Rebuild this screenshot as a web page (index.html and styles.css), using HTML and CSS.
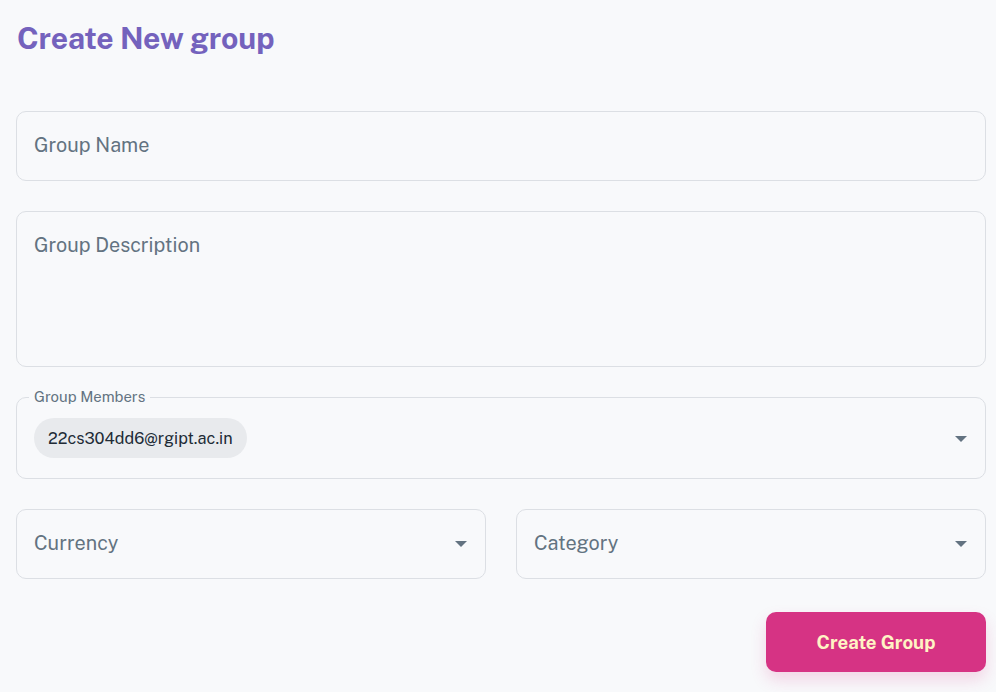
FILE: index.html
```html
<!DOCTYPE html>
<html>
<head>
<meta charset="utf-8">
<link rel="stylesheet" href="styles.css">
</head>
<body>
<div class="page">
  <h1 class="title">Create New group</h1>
  <form class="form">
    <div class="field field-name"><span class="placeholder">Group Name</span></div>
    <div class="field field-desc"><span class="placeholder">Group Description</span></div>
    <div class="field field-members">
      <span class="legend">Group Members</span>
      <span class="chip">22cs304dd6@rgipt.ac.in</span>
      <span class="caret"></span>
    </div>
    <div class="row">
      <div class="field field-select"><span class="placeholder">Currency</span><span class="caret"></span></div>
      <div class="field field-select"><span class="placeholder">Category</span><span class="caret"></span></div>
    </div>
    <div class="actions">
      <button type="button" class="btn">Create Group</button>
    </div>
  </form>
</div>
</body>
</html>
```
FILE: styles.css
```css
* { box-sizing: border-box; }
html, body { margin: 0; padding: 0; }
body {
  background: #f8f9fb;
  font-family: "Public Sans", Inter, "Noto Sans", sans-serif;
  width: 996px;
  height: 692px;
  overflow: hidden;
}
.page {
  padding: 20px 10px 0 16px;
}
.title {
  margin: 0 0 0 1px;
  font-size: 30.2px;
  line-height: 36px;
  font-weight: 700;
  color: #7462bd;
  letter-spacing: -0.15px;
}
.form {
  margin-top: 55px;
  display: flex;
  flex-direction: column;
  gap: 30px;
}
.field {
  position: relative;
  border: 1px solid #dcdfe4;
  border-radius: 10px;
  display: flex;
  align-items: center;
  padding: 0 17px;
}
.placeholder {
  font-size: 19.8px;
  color: #637381;
}
.field-name { height: 70px; }
.field-name .placeholder { margin-top: -4px; }
.field-desc { height: 156px; align-items: flex-start; padding-top: 21px; }
.field-members { height: 82px; }
.legend {
  position: absolute;
  top: -10px;
  left: 12px;
  padding: 0 5px;
  background: #f8f9fb;
  font-size: 14.9px;
  line-height: 18px;
  color: #637381;
}
.chip {
  height: 40px;
  padding: 0 14px;
  border-radius: 20px;
  background: #e8eaed;
  display: inline-flex;
  align-items: center;
  font-size: 16.3px;
  color: #212b36;
}
.caret {
  margin-left: auto;
  margin-right: 1px;
  width: 0;
  height: 0;
  border-left: 6px solid transparent;
  border-right: 6px solid transparent;
  border-top: 6px solid #637381;
}
.field-members .caret { margin-top: 2px; }
.row {
  display: grid;
  grid-template-columns: 1fr 1fr;
  gap: 30px;
}
.field-select { height: 70px; }
.field-select .placeholder { margin-top: -4px; }
.actions {
  display: flex;
  justify-content: flex-end;
  margin-top: 3px;
}
.btn {
  width: 220px;
  height: 60px;
  border: none;
  border-radius: 10px;
  background: #d63384;
  color: #fff3c4;
  font-family: inherit;
  font-size: 18.6px;
  font-weight: 700;
  box-shadow: 0 8px 16px rgba(214, 51, 132, 0.18);
}
```
